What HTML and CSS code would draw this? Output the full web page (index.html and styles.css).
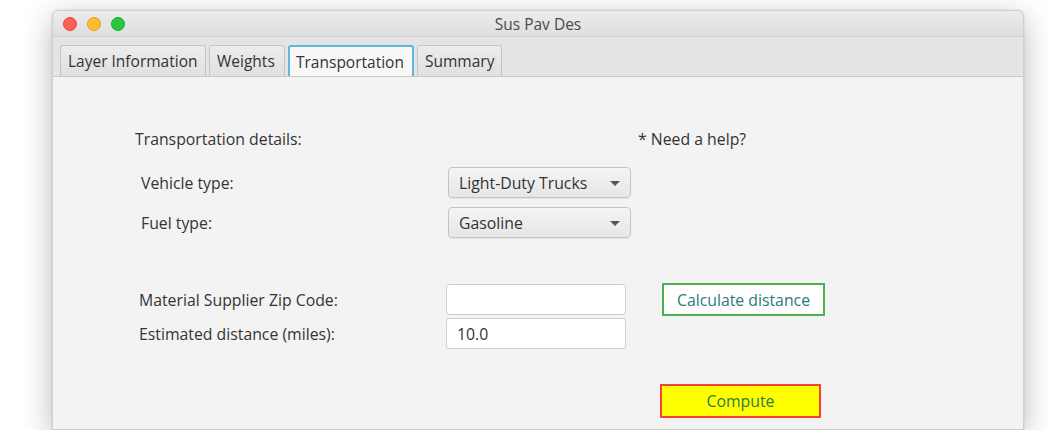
FILE: index.html
```html
<!DOCTYPE html>
<html>
<head>
<meta charset="utf-8">
<title>Sus Pav Des</title>
<link rel="stylesheet" href="styles.css">
</head>
<body>
<div class="window">
  <div class="titlebar">
    <div class="lights">
      <span class="light red"></span>
      <span class="light yellow"></span>
      <span class="light green"></span>
    </div>
    <div class="title">Sus Pav Des</div>
  </div>
  <div class="tabbar">
    <div class="tab tab-layer">Layer Information</div>
    <div class="tab tab-weights">Weights</div>
    <div class="tab tab-transport active">Transportation</div>
    <div class="tab tab-summary">Summary</div>
  </div>
  <div class="content">
    <div class="row head-row">
      <span class="heading">Transportation details:</span>
      <span class="help">* Need a help?</span>
    </div>
    <div class="row select-row first-select">
      <span class="label">Vehicle type:</span>
      <div class="combo">Light-Duty Trucks<span class="arrow"></span></div>
    </div>
    <div class="row select-row">
      <span class="label">Fuel type:</span>
      <div class="combo">Gasoline<span class="arrow"></span></div>
    </div>
    <div class="row field-row first-field">
      <span class="label">Material Supplier Zip Code:</span>
      <div class="field"></div>
      <div class="btn-calc">Calculate distance</div>
    </div>
    <div class="row field-row">
      <span class="label">Estimated distance (miles):</span>
      <div class="field">10.0</div>
    </div>
    <div class="row compute-row">
      <div class="btn-compute">Compute</div>
    </div>
  </div>
</div>
</body>
</html>
```

FILE: styles.css
```css
* { box-sizing: border-box; }

html, body {
  margin: 0;
  padding: 0;
  background: #ffffff;
  height: 430px;
  overflow: hidden;
}

body {
  font-family: "Open Sans", "Liberation Sans", Arial, sans-serif;
  font-size: 15.8px;
  color: #333333;
  padding: 10px 0 0 52px;
}

.window {
  width: 972px;
  height: 420px;
  background: #f3f3f3;
  border-radius: 6px 6px 0 0;
  border: 1px solid #cfcfcf;
  box-shadow: 0 8px 30px rgba(0,0,0,0.28), 0 0 2px rgba(0,0,0,0.15);
  overflow: hidden;
}

.titlebar {
  height: 26px;
  background: linear-gradient(#ececec, #dedede);
  border-bottom: 1px solid #d0d0d0;
  display: flex;
  align-items: center;
  position: relative;
}

.lights {
  display: flex;
  gap: 10px;
  padding-left: 10px;
}

.light {
  width: 14px;
  height: 14px;
  border-radius: 50%;
}
.light.red { background: #fc5f57; border: 1px solid #e2463f; }
.light.yellow { background: #fdbc2e; border: 1px solid #e1a116; }
.light.green { background: #29c840; border: 1px solid #13ab2a; }

.title {
  position: absolute;
  left: 0;
  right: 0;
  text-align: center;
  font-size: 15.5px;
  color: #4a4a4a;
}

.tabbar {
  height: 40px;
  background: #e4e4e4;
  border-bottom: 1px solid #c9c9c9;
  display: flex;
  align-items: flex-end;
  padding-left: 7px;
  gap: 3px;
}

.tab {
  height: 31px;
  padding: 0 7px;
  display: flex;
  align-items: center;
  background: linear-gradient(#ececec, #e0e0e0);
  border: 1px solid #c4c4c4;
  border-bottom: none;
  border-radius: 3px 3px 0 0;
  font-size: 15.5px;
  color: #333;
  white-space: nowrap;
}
.tab-layer { width: 146px; }
.tab-weights { width: 76px; }
.tab-transport { width: 126px; }
.tab-summary { width: 85px; }

.tab.active {
  background: #f7f7f7;
  border: 2px solid #60b6df;
  border-bottom: none;
  padding-left: 6px;
}

.content {
  padding-top: 51px;
}

.row {
  display: flex;
  align-items: center;
  white-space: nowrap;
}

.head-row {
  height: 22px;
  padding-left: 82px;
}
.heading { width: 503px; }

.select-row {
  height: 31px;
  padding-left: 88px;
  margin-top: 9px;
}
.first-select { margin-top: 17px; }

.select-row .label { width: 307px; }

.combo {
  width: 183px;
  height: 31px;
  border: 1px solid #c3c3c3;
  border-radius: 4px;
  background: linear-gradient(#f4f4f4, #e6e6e6);
  display: flex;
  align-items: center;
  padding-left: 10px;
  position: relative;
  box-shadow: 0 1px 1px rgba(0,0,0,0.06);
}

.arrow {
  position: absolute;
  right: 10px;
  top: 13px;
  width: 0;
  height: 0;
  border-left: 5px solid transparent;
  border-right: 5px solid transparent;
  border-top: 5px solid #555;
}

.field-row {
  height: 31px;
  padding-left: 86px;
  margin-top: 3px;
}
.first-field { margin-top: 46px; }

.field-row .label { width: 307px; }

.field {
  width: 180px;
  height: 31px;
  background: #ffffff;
  border: 1px solid #cdcdcd;
  border-radius: 3px;
  display: flex;
  align-items: center;
  padding-left: 10px;
}

.btn-calc {
  margin-left: 36px;
  width: 163px;
  height: 33px;
  border: 2px solid #4caf50;
  background: #ffffff;
  color: #2b7a78;
  display: flex;
  align-items: center;
  justify-content: center;
}

.compute-row {
  padding-left: 607px;
  margin-top: 35px;
}

.btn-compute {
  width: 161px;
  height: 34px;
  background: #ffff00;
  border: 2px solid #f44336;
  color: #2b7a50;
  display: flex;
  align-items: center;
  justify-content: center;
}
```
